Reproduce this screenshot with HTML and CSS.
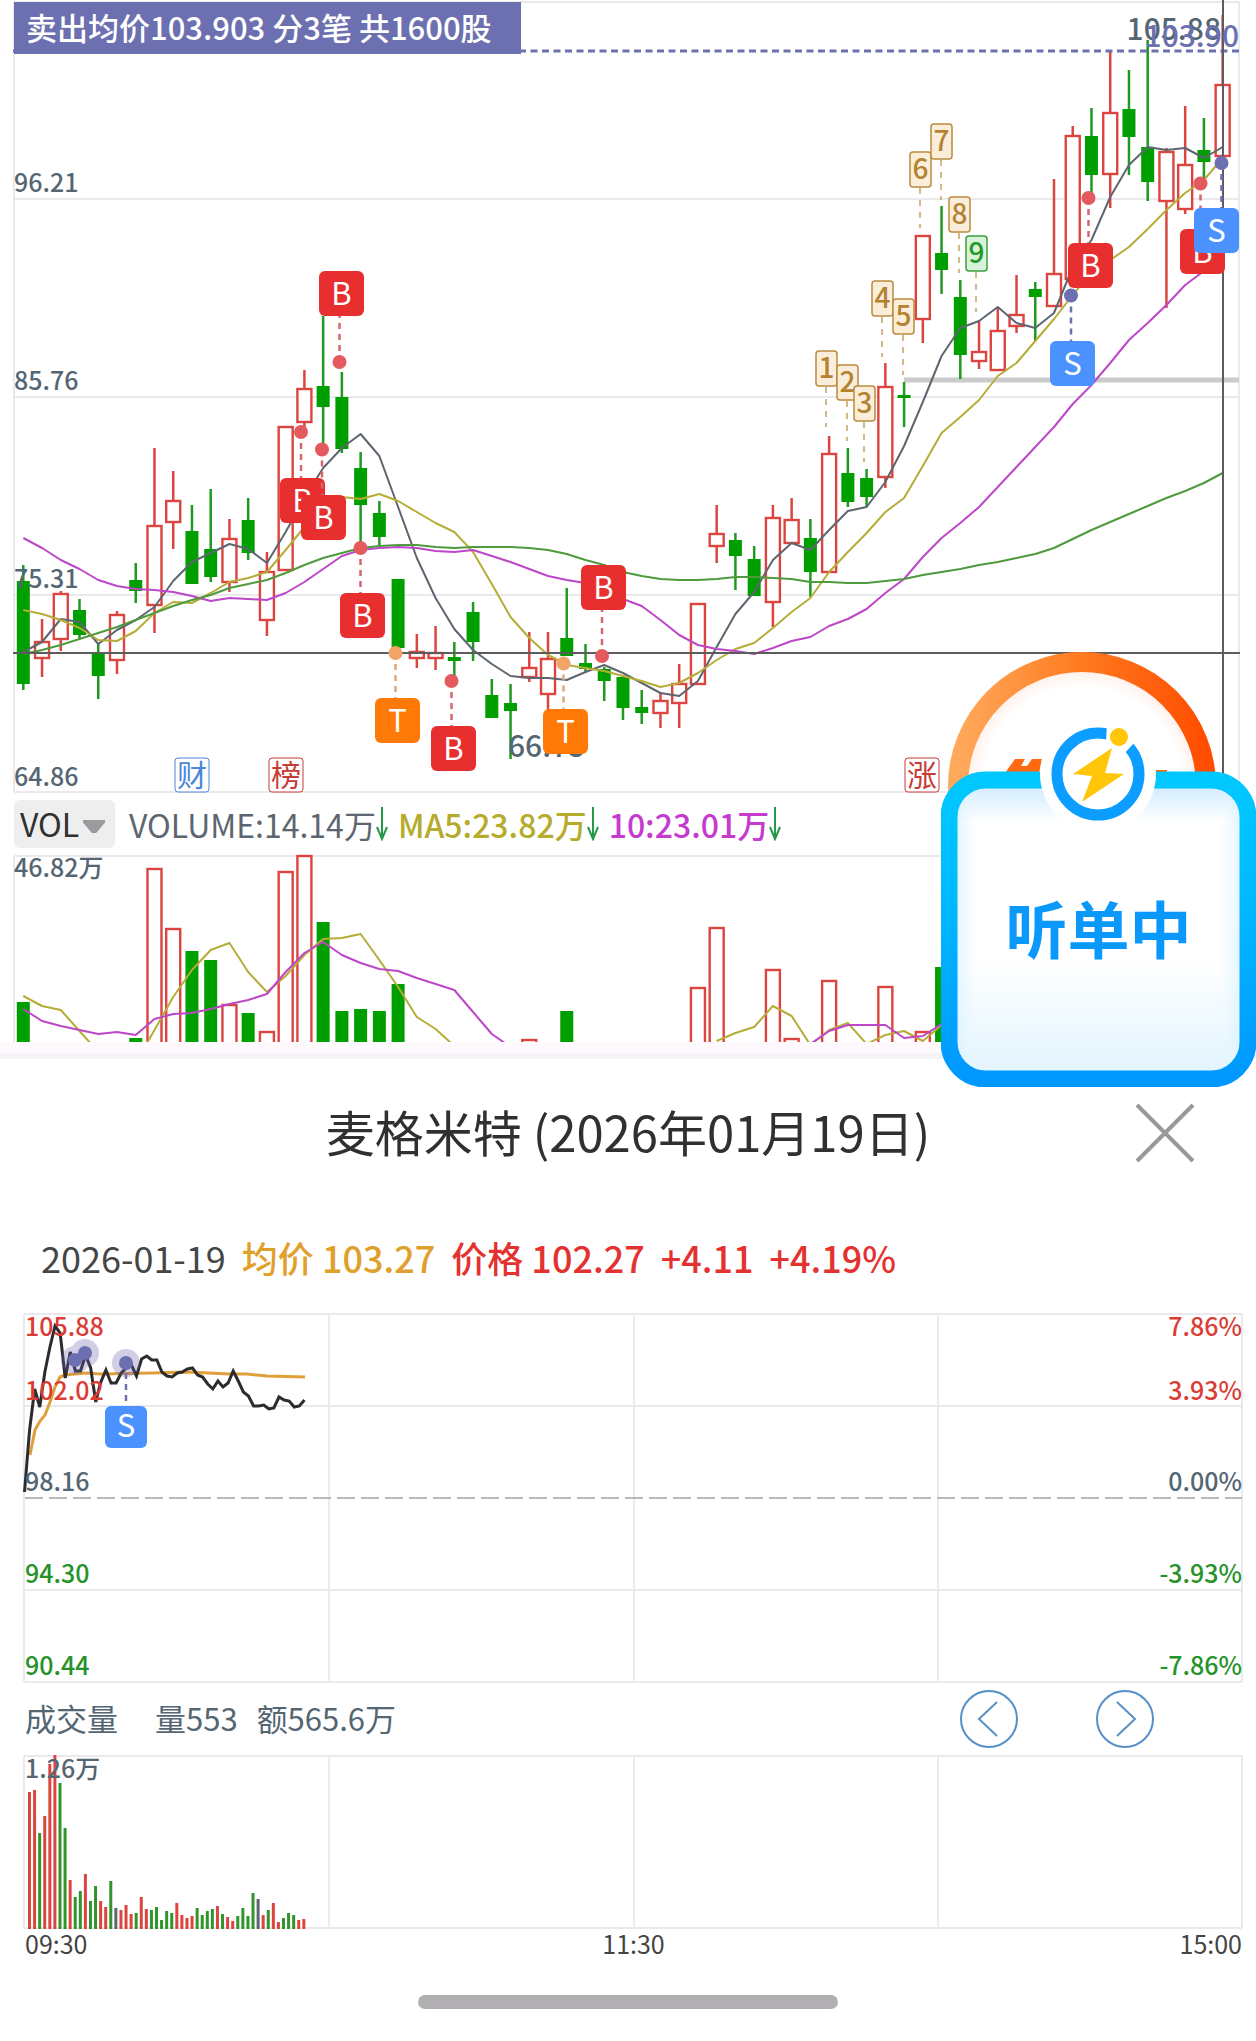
FILE: index.html
```html
<!DOCTYPE html>
<html lang="zh-CN">
<head>
<meta charset="utf-8">
<meta name="viewport" content="width=device-width, initial-scale=1">
<title>麦格米特</title>
<link rel="stylesheet" href="styles.css">
</head>
<body>
<main class="page">
  <section class="daily" aria-label="日K线">
    <svg class="chart" viewBox="0 0 1256 800" role="img" aria-label="日K线图">
      <path class="grid" d="M14 2H1239M14 199H1239M14 397H1239M14 595H1239M14 792H1239M14 2V792M1239 2V792"/>
      <path class="support" d="M904 380H1239"/>
      <g id="candles"></g>
      <g id="averages"></g>
      <path class="cost" d="M13 51H1241"/>
      <path class="cross" d="M13 653H1240M1223 0V792"/>
      <g class="axis">
        <text x="14" y="192">96.21</text>
        <text x="14" y="390">85.76</text>
        <text x="14" y="588">75.31</text>
        <text x="14" y="786">64.86</text>
      </g>
      <g class="extreme">
        <text x="508" y="757">66.75</text>
        <text x="1221" y="40" text-anchor="end">105.88</text>
        <text class="cost-text" x="1239" y="47" text-anchor="end">103.90</text>
      </g>
      <g id="counts"></g>
      <g id="trades"></g>
      <g class="event">
        <g class="event-blue"><rect x="175" y="758" width="34" height="34" rx="3"/><text x="192" y="786">财</text></g>
        <g class="event-red"><rect x="269" y="758" width="34" height="34" rx="3"/><text x="286" y="786">榜</text></g>
        <g class="event-red"><rect x="905" y="758" width="34" height="34" rx="3"/><text x="922" y="786">涨</text></g>
      </g>
      <rect class="banner" x="14" y="2" width="507" height="52"/>
      <text class="banner-text" x="26" y="40">卖出均价103.903 分3笔 共1600股</text>
    </svg>
    <div class="indicator">
      <label class="picker">
        <select class="picker-select" aria-label="指标"><option>VOL</option></select>
      </label>
      <div class="values">
        <span class="value slate">VOLUME:14.14万<svg class="down" viewBox="0 0 12 34"><path d="M6 0V32M1 20L6 32L11 20"/></svg></span>
        <span class="value olive">MA5:23.82万<svg class="down" viewBox="0 0 12 34"><path d="M6 0V32M1 20L6 32L11 20"/></svg></span>
        <span class="value magenta">10:23.01万<svg class="down" viewBox="0 0 12 34"><path d="M6 0V32M1 20L6 32L11 20"/></svg></span>
      </div>
    </div>
    <svg class="chart" viewBox="0 0 1256 194" role="img" aria-label="成交量图">
      <path class="grid" d="M14 8H1239M14 8V194M1239 8V194"/>
      <g id="volumes"></g>
      <g class="axis"><text x="14" y="29">46.82万</text></g>
    </svg>
  </section>

  <section class="sheet" aria-labelledby="sheet-title">
    <header class="sheet-head">
      <h1 class="title" id="sheet-title">麦格米特 (2026年01月19日)</h1>
      <button class="close" type="button" aria-label="关闭">
        <svg viewBox="0 0 60 60"><path d="M2 2L58 58M58 2L2 58"/></svg>
      </button>
    </header>
    <div class="quote">
      <span class="quote-date">2026-01-19</span>
      <span class="quote-avg">均价 103.27</span>
      <span>价格 102.27</span>
      <span>+4.11</span>
      <span>+4.19%</span>
    </div>
    <svg class="chart" viewBox="0 0 1256 394" role="img" aria-label="分时图">
      <path class="grid" d="M24 24H1242M24 116H1242M24 300H1242M24 392H1242M24 24V392M1242 24V392"/>
      <path class="grid grid-wide" d="M329 24V392M634 24V392M938 24V392"/>
      <path class="base" d="M25 208H1242"/>
      <path class="avg-line" d="M30 165L35 140L40 131L45 125L50 112L55 97L60 87L65 85L75 84L87 83L100 84L152 83L187 82L230 84L247 84L267 86L305 87"/>
      <path class="price-line" id="price"/>
      <g class="axis">
        <text class="up" x="25" y="46">105.88</text>
        <text class="up" x="25" y="110">102.02</text>
        <text x="25" y="201">98.16</text>
        <text class="fall" x="25" y="293">94.30</text>
        <text class="fall" x="25" y="385">90.44</text>
      </g>
      <g class="axis" text-anchor="end">
        <text class="up" x="1242" y="46">7.86%</text>
        <text class="up" x="1242" y="110">3.93%</text>
        <text x="1242" y="201">0.00%</text>
        <text class="fall" x="1242" y="293">-3.93%</text>
        <text class="fall" x="1242" y="385">-7.86%</text>
      </g>
      <g class="halo"><circle cx="75" cy="70" r="14"/><circle cx="85" cy="63" r="14"/><circle cx="126" cy="73" r="14"/></g>
      <g class="sell-dot"><circle cx="75" cy="70" r="7"/><circle cx="85" cy="63" r="7"/><circle cx="126" cy="73" r="7"/></g>
      <path class="sell-stem" d="M126 83V116"/>
      <rect class="sell-box" x="105" y="116" width="42" height="42" rx="6"/>
      <text class="badge-text" x="126" y="147">S</text>
    </svg>
    <div class="turnover">
      <div class="turnover-text">
        <span>成交量</span>
        <span class="turnover-first">量553</span>
        <span>额565.6万</span>
      </div>
      <nav class="pager" aria-label="切换日期">
        <button class="page-button" type="button" aria-label="前一日"><svg viewBox="0 0 60 60"><circle cx="30" cy="30" r="28"/><path d="M38 13L20 30L38 47"/></svg></button>
        <button class="page-button" type="button" aria-label="后一日"><svg viewBox="0 0 60 60"><circle cx="30" cy="30" r="28"/><path d="M22 13L40 30L22 47"/></svg></button>
      </nav>
    </div>
    <svg class="chart chart-open" viewBox="0 0 1256 176" role="img" aria-label="分时成交量图">
      <path class="grid" d="M24 2H1242M24 174H1242M24 2V174M1242 2V174"/>
      <path class="grid grid-wide" d="M329 2V174M634 2V174M938 2V174"/>
      <g id="minutes"></g>
      <g class="axis"><text x="25" y="24">1.26万</text></g>
    </svg>
    <div class="times"><span>09:30</span><span>11:30</span><span>15:00</span></div>
    <div class="home-bar"></div>
  </section>

  <button class="float" type="button">
    <svg class="float-art" viewBox="0 0 315 435" aria-hidden="true">
      <defs>
        <linearGradient id="orange" x1="0" x2="1"><stop offset="0" stop-color="#ffa95c"/><stop offset=".5" stop-color="#ff7a1f"/><stop offset="1" stop-color="#ff4d00"/></linearGradient>
        <linearGradient id="blue" x1="0" x2="0" y1="0" y2="1"><stop offset="0" stop-color="#00c8ff"/><stop offset=".35" stop-color="#00bcff"/><stop offset="1" stop-color="#0098ff"/></linearGradient>
        <linearGradient id="panel" x1="0" x2="0" y1="0" y2="1"><stop offset="0" stop-color="#c8e8ff"/><stop offset=".14" stop-color="#fff"/><stop offset=".6" stop-color="#fff"/><stop offset="1" stop-color="#e1f4ff"/></linearGradient>
        <linearGradient id="edge" x1="0" x2="1"><stop offset="0" stop-color="#d0eeff"/><stop offset=".1" stop-color="#eefaff" stop-opacity="0"/><stop offset=".9" stop-color="#eefaff" stop-opacity="0"/><stop offset="1" stop-color="#d0eeff"/></linearGradient>
        <radialGradient id="glow"><stop offset=".8" stop-color="#fff"/><stop offset="1" stop-color="#ffeae0"/></radialGradient>
      </defs>
      <circle cx="141" cy="134" r="124" fill="url(#glow)" stroke="url(#orange)" stroke-width="20"/>
      <path fill="#ff6a10" d="M64 121L74 107H84L80 114H86L91 107H101L98 121ZM206 118H226V124H206Z"/>
      <rect x="8" y="128" width="299" height="299" rx="37" fill="url(#panel)"/>
      <rect x="8" y="128" width="299" height="299" rx="37" fill="url(#edge)" stroke="url(#blue)" stroke-width="17"/>
      <circle cx="157" cy="122" r="58" fill="#fff"/>
      <circle cx="157" cy="122" r="41" fill="none" stroke="#0b9dff" stroke-width="11"/>
      <path fill="#fff" d="M166 70H190L194 90L182 103L165 90Z"/>
      <circle cx="178" cy="85" r="9" fill="#ffc60a"/>
      <path fill="#ffc60a" d="M171 96L132 122L151 124L141 150L183 122L164 121Z"/>
    </svg>
    <span class="float-text">听单中</span>
  </button>
</main>
<script src="charts.js"></script>
</body>
</html>
```
FILE: styles.css
```css
* { box-sizing: border-box; }
body {
  margin: 0;
  background: #fff;
  color: #556673;
  font-family: "Noto Sans CJK SC", "Noto Sans", sans-serif;
}
button { padding: 0; border: 0; background: none; font: inherit; color: inherit; cursor: pointer; }
.page { position: relative; overflow: hidden; }
.chart { display: block; width: 100%; height: auto; }
.chart-open { overflow: visible; }

.grid { fill: none; stroke: #e4e4e6; stroke-width: 1.5; }
.grid-wide { stroke: #ececee; stroke-width: 2; }
.support { stroke: #cbcbcb; stroke-width: 5; }
.cost { stroke: #6c70b0; stroke-width: 3; stroke-dasharray: 7 4.5; }
.cross { fill: none; stroke: #5c5c5c; stroke-width: 2; }
.axis { fill: #556673; font-size: 25px; font-weight: 500; }
.axis .up { fill: #dc3c36; }
.axis .fall { fill: #26932a; }
.extreme { fill: #556673; font-size: 30px; font-weight: 500; }
.extreme .cost-text { fill: #6c70b0; }
.banner { fill: #6c70b0; }
.banner-text { fill: #fff; font-size: 31px; font-weight: 500; }

.red-wick { stroke: #dc453f; stroke-width: 2.5; }
.green-wick { stroke: #1f991f; stroke-width: 2.5; }
.red-body { fill: #fff; stroke: #dc453f; stroke-width: 2.4; }
.green-body { fill: #009f00; }
.line { fill: none; stroke-width: 2; stroke-linejoin: round; }
.line-slate { stroke: #5d6670; }
.line-olive { stroke: #b6ad37; }
.line-magenta { stroke: #bd47c8; }
.line-green { stroke: #4e9a3c; }

.buy-box { fill: #e72f2f; }
.buy-dot { fill: #e35b5f; }
.buy-stem { stroke: #d4676b; }
.sell-box { fill: #4b92ff; }
.sell-dot { fill: #6c70b0; }
.sell-stem { stroke: #6c70b0; }
.both-box { fill: #ff7906; }
.both-dot { fill: #f0a468; }
.both-stem { stroke: #dfa777; }
.buy-stem, .sell-stem, .both-stem { stroke-width: 2.5; stroke-dasharray: 6 5; }
.badge-text { fill: #fff; font-size: 31px; text-anchor: middle; }
.count rect { fill: #faeedb; stroke: #b98c3e; stroke-width: 1.5; }
.count text { fill: #b48331; font-size: 28px; font-weight: 500; text-anchor: middle; }
.count path { stroke: #c6a163; stroke-width: 1.5; stroke-dasharray: 6 6; }
.count-last rect { fill: #d9f2da; stroke: #3c9e3f; }
.count-last text { fill: #1f9a27; }
.event { font-size: 30px; text-anchor: middle; }
.event rect { fill: #fff; stroke-width: 1; }
.event-blue rect { stroke: #4b87d8; }
.event-blue text { fill: #4b87d8; }
.event-red rect { stroke: #c73c36; }
.event-red text { fill: #c73c36; }

.indicator { display: flex; align-items: center; gap: 14px; height: 48px; padding-left: 14px; font-size: 32px; line-height: 46px; }
.picker { position: relative; display: block; width: 101px; height: 48px; }
.picker-select {
  width: 100%; height: 100%; padding: 0 0 2px 6px; border: 0; border-radius: 6px;
  background: #eee; color: #303030; font: inherit; appearance: none;
}
.picker::after {
  content: ""; position: absolute; right: 10px; top: 20px; width: 22px; height: 13px;
  background: #9b9a9e; clip-path: polygon(0 0, 100% 0, 100% 20%, 60% 100%, 40% 100%, 0 20%); pointer-events: none;
}
.values { display: flex; gap: 10px; white-space: nowrap; }
.value { display: flex; align-items: center; }
.slate { color: #5d6670; }
.olive { color: #b5ab2c; font-weight: 500; }
.magenta { color: #c53bd0; font-weight: 500; }
.down { width: 12px; height: 34px; fill: none; stroke: #249a48; stroke-width: 2; }

.sheet { border-top: 6px solid #f5f4f6; }
.daily { padding-bottom: 11px; background: linear-gradient(#fff, #fff) top / 100% calc(100% - 11px) no-repeat, #fdf9fd; }
.sheet-head { position: relative; display: flex; justify-content: center; padding: 34px 60px 50px; }
.title { margin: 0; color: #2f3030; font-size: 49px; font-weight: 400; line-height: 76px; }
.close { position: absolute; right: 61px; top: 44px; width: 60px; height: 60px; }
.close svg { display: block; fill: none; stroke: #999; stroke-width: 4; }
.quote { display: flex; gap: 16px; padding: 12px 41px 0; height: 71px; color: #e33230; font-size: 36px; font-weight: 500; line-height: 52px; white-space: nowrap; }
.quote-date { color: #454747; font-weight: 400; }
.quote-avg { color: #e0a02c; }
.base { stroke: #a2a2a2; stroke-width: 1.5; stroke-dasharray: 18 6; }
.avg-line { fill: none; stroke: #dfa03c; stroke-width: 3; }
.price-line { fill: none; stroke: #2c2c2c; stroke-width: 3; }
.halo { fill: #6c60b0; opacity: .3; }

.turnover { display: flex; justify-content: space-between; align-items: center; height: 70px; padding: 0 101px 0 25px; font-size: 31px; }
.turnover-text { display: flex; gap: 19px; padding-bottom: 4px; }
.turnover-first { margin-left: 18px; }
.pager { display: flex; gap: 76px; }
.page-button { width: 60px; height: 60px; }
.page-button svg { display: block; fill: none; stroke: #5590c8; stroke-width: 2; }
.bar-red { fill: #dc453f; }
.bar-green { fill: #31952b; }
.bar-slate { fill: #5d6670; }
.times { display: flex; justify-content: space-between; padding: 0 14px 0 25px; color: #444; font-size: 25px; line-height: 26px; }
.home-bar { width: 420px; height: 14px; margin: 39px auto 32px; border-radius: 7px; background: #b1afb1; }

.float { position: absolute; top: 652px; right: 0; width: 315px; height: 435px; }
.float-art { display: block; width: 100%; height: 100%; }
.float-text { position: absolute; left: 0; right: 0; top: 230px; color: #0a99fb; font-size: 62px; font-weight: 700; line-height: 90px; text-align: center; }
```
FILE: charts.js
```js
const NS = "http://www.w3.org/2000/svg";
const xOf = i => 23.3 + i * 18.74;

function add(parent, tag, attrs, text) {
  const el = document.createElementNS(NS, tag);
  for (const key in attrs) el.setAttribute(key, attrs[key]);
  if (text) el.textContent = text;
  parent.appendChild(el);
  return el;
}

// kind, high, low, body top, body bottom
const candles = `G565,690,581,684 R619,677,642,658 R591,651,594,639 G599,639,610,635 G643,699,654,676
R611,674,615,660 G563,603,580,591 R448,633,526,605 R471,549,501,522 G505,584,531,584
G489,582,549,577 R519,592,539,582 G498,560,520,553 R552,636,572,620 R427,571,427,570
R370,430,389,422 G316,445,386,407 G372,453,397,449 G452,547,468,505 G501,545,513,537
G579,648,579,648 R634,668,652,658 R626,670,653,658 G642,680,657,661 G602,661,612,642
G679,718,695,718 G684,759,703,711 R632,682,668,677 R632,713,659,694 G588,656,638,656
G644,673,663,669 G667,701,669,681 G675,720,677,708 G690,724,707,713 R693,728,701,713
R664,728,684,703 R603,685,604,684 R505,563,534,546 G533,590,540,556 G546,596,559,596
R505,627,518,602 R498,544,520,543 G519,597,538,572 R436,573,454,572 G448,507,473,502
G469,507,478,497 R363,488,387,477 G382,427,395,398 R235,343,236,319 G206,294,253,270
G280,379,297,355 R321,369,352,361 R307,370,331,370 R275,333,315,326 G282,341,289,297
R179,307,274,306 R126,283,136,279 G108,197,136,175 R51,208,113,174 G70,175,109,137
G40,201,147,182 R148,308,152,201 R106,214,165,209 G118,180,150,162 R15,157,85,156`.split(/\s+/);

const candleLayer = document.getElementById("candles");
candles.forEach((item, i) => {
  const red = item[0] === "R";
  const [high, low, top, bottom] = item.slice(1).split(",").map(Number);
  const x = xOf(i);
  add(candleLayer, "path", { class: red ? "red-wick" : "green-wick", d: `M${x} ${high}V${low}` });
  add(candleLayer, "rect", red
    ? { class: "red-body", x: x - 7, y: top, width: 14, height: bottom - top }
    : { class: "green-body", x: x - 6.5, y: top, width: 13, height: bottom - top });
});

function drawLine(layer, colour, values, start) {
  const points = values.map((y, i) => `${xOf(i + start)},${y}`).join(" ");
  add(layer, "polyline", { class: "line line-" + colour, points });
}

const averages = document.getElementById("averages");
drawLine(averages, "slate", [652,642,619,622,644,630,620,607,581,562,553,544,549,563,532,498,468,448,434,456,507,558,598,629,650,664,676,678,678,680,672,665,673,683,693,696,681,647,614,592,560,543,550,530,511,507,482,446,402,356,328,321,307,323,328,313,267,240,197,165,147,150,148,158,147], 0);
drawLine(averages, "olive", [610,614,620,628,640,641,631,613,602,603,593,582,578,572,550,527,502,497,499,494,501,512,523,532,552,584,617,638,655,665,668,671,676,681,687,683,673,660,649,643,628,612,598,572,552,533,512,498,466,433,417,400,376,363,341,319,295,272,260,247,229,210,193,180,158], 0);
drawLine(averages, "magenta", [538,548,560,569,580,586,589,590,592,596,601,598,599,600,593,582,569,556,550,548,547,548,551,552,550,556,562,569,576,580,583,592,599,606,620,635,645,649,651,654,648,641,637,626,619,609,593,579,557,538,523,507,487,467,447,427,404,385,363,340,323,305,285,271,257], 0);
drawLine(averages, "green", [654,650,645,639,633,627,620,613,606,600,595,588,584,580,573,565,558,553,548,546,545,545,547,548,547,547,547,548,550,554,560,565,572,576,579,580,580,579,577,577,578,579,582,582,583,583,581,579,575,572,569,565,562,558,554,548,539,530,522,514,506,498,491,483,473], 0);

// sequence labels: left edge, top edge
const countLayer = document.getElementById("counts");
[[816,351],[837,365],[854,386],[872,281],[893,299],[910,152],[931,124],[949,197],[966,236]].forEach(([x, y], i) => {
  const g = add(countLayer, "g", { class: i === 8 ? "count count-last" : "count" });
  add(g, "path", { d: `M${x + 10} ${y + 36}V${y + 76}` });
  add(g, "rect", { x, y, width: 21, height: 35, rx: 3 });
  add(g, "text", { x: x + 10.5, y: y + 27 }, String(i + 1));
});

// trade marks: kind, letter, box left, box top, dot x, dot y
const tradeLayer = document.getElementById("trades");
[["buy","B",319,271,339.5,362],["buy","B",280,478,301,432],["buy","B",301,495,322,449.5],
 ["buy","B",340,593,360.5,548],["both","T",375,698,395.5,653],["buy","B",431,726,451.5,681],
 ["both","T",543,709,563.5,663.5],["buy","B",581,565,602,656],["sell","S",1050,341,1071,295.5],["buy","B",1068,243,1088.5,198],
 ["buy","B",1180,229,1200.5,183.5],["sell","S",1194,208,1221.5,163]
].forEach(([kind, letter, x, y, cx, cy]) => {
  const edge = cy > y ? y + 45 : y;
  add(tradeLayer, "path", { class: kind + "-stem", d: `M${cx} ${cy}V${edge}` });
  add(tradeLayer, "circle", { class: kind + "-dot", cx, cy, r: 7 });
  add(tradeLayer, "rect", { class: kind + "-box", x, y, width: 45, height: 45, rx: 6 });
  add(tradeLayer, "text", { class: "badge-text", x: x + 22.5, y: y + 34 }, letter);
});

const volumes = { 0:"G154",6:"G190",7:"R21",8:"R81",9:"G103",10:"G112",11:"R157",12:"G165",13:"R184",14:"R24",15:"R8",16:"G74",17:"G163",18:"G161",19:"G163",20:"G136",27:"R192",29:"G163",36:"R140",37:"R80",40:"R122",41:"R191",43:"R133",46:"R139",48:"R184",49:"G119" };
const volumeLayer = document.getElementById("volumes");
for (const i in volumes) {
  const red = volumes[i][0] === "R";
  const top = Number(volumes[i].slice(1));
  add(volumeLayer, "rect", { class: red ? "red-body" : "green-body", x: xOf(+i) - (red ? 7 : 6.5), y: top, width: red ? 14 : 13, height: 200 - top });
}
drawLine(volumeLayer, "olive", [148,158,162,183,204], 0);
drawLine(volumeLayer, "olive", [215,182,149,122,102,95,124,144,128,107,91,90,86,112,139,169,181,198], 6);
drawLine(volumeLayer, "olive", [193,185,179,158,168,197,182,175,196,187,183,193,177], 37);
drawLine(volumeLayer, "magenta", [161,173,178,182,186,184,187,171,166,165,161,156,152,146,124,105,94,107,115,121,123,130,136,142,164,186,199], 0);
drawLine(volumeLayer, "magenta", [196,183,177,177,177,190,188,176], 42);

const prices = [202,140,99,117,82,57,36,43,88,62,81,81,65,78,112,92,80,93,93,83,78,75,86,69,66,70,70,82,86,87,83,82,79,78,85,87,94,99,91,97,93,81,91,102,106,116,116,115,119,118,107,110,111,117,116,110];
document.getElementById("price").setAttribute("d", "M" + prices.map((y, i) => `${24.5 + i * 5.09} ${y}`).join("L"));

const minutes = "137R,139R,96G,113R,165R,174R,146G,101G,49R,32G,38G,55R,28G,43G,28R,22R,48G,21S,19R,24R,15R,16G,32R,20R,19G,22G,9G,18G,16G,26R,14R,11R,13R,21G,14G,18G,20G,23R,15G,12R,8R,13G,21G,13G,36G,30S,14R,19G,26R,7R,11G,16G,14G,9R,10R".split(",");
const barClass = { R: "bar-red", G: "bar-green", S: "bar-slate" };
const minuteLayer = document.getElementById("minutes");
minutes.forEach((item, i) => {
  const height = parseInt(item, 10);
  add(minuteLayer, "rect", { class: barClass[item.slice(-1)], x: 28 + i * 5.08, y: 175 - height, width: 3, height });
});
```
